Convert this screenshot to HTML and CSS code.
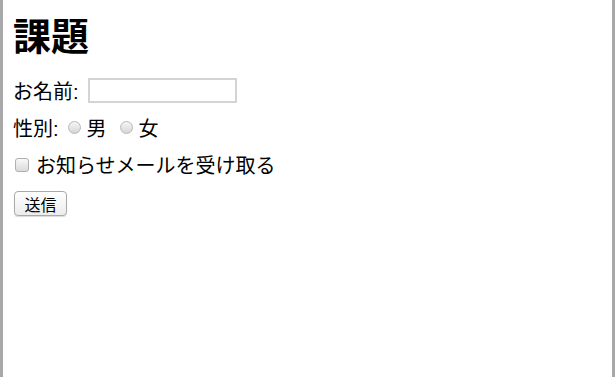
FILE: index.html
```html
<!DOCTYPE html>
<html lang="ja">
<head>
    <meta charset="UTF-8">
    <title>課題</title>
    <link rel="stylesheet" href="styles.css">
</head>
<body>
    <div class="page">
        <h1>課題</h1>

        <form class="form">
            <div class="row">
                <label for="name">お名前:</label>
                <input type="text" id="name" class="text-input">
            </div>

            <div class="row">
                <span>性別:</span>
                <label class="choice"><input type="radio" name="gender" class="radio">男</label>
                <label class="choice"><input type="radio" name="gender" class="radio">女</label>
            </div>

            <div class="row">
                <label class="choice first"><input type="checkbox" class="check">お知らせメールを受け取る</label>
            </div>

            <div class="row row-button">
                <button type="button" class="submit">送信</button>
            </div>
        </form>
    </div>
</body>
</html>
```

FILE: styles.css
```css
html, body {
    margin: 0;
    height: 100%;
    background: #fff;
}

body {
    font-family: "Liberation Sans", "Noto Sans CJK JP", sans-serif;
    font-size: 20px;
    color: #000;
}

.page {
    box-sizing: border-box;
    min-height: 100vh;
    border-left: 3px solid #a8a8a8;
    border-right: 3px solid #a8a8a8;
    padding: 0 10px;
}

h1 {
    font-size: 38px;
    line-height: 48px;
    margin: 0 0 11px;
    padding-top: 13px;
    font-weight: bold;
}

.form {
    display: flex;
    flex-direction: column;
}

.row {
    display: flex;
    align-items: center;
    height: 37px;
}

.row label,
.row span {
    display: inline-flex;
    align-items: center;
}

.text-input {
    width: 149px;
    height: 25px;
    box-sizing: border-box;
    border: 2px solid #d4d4d4;
    border-radius: 0;
    margin: 0 0 0 9px;
    padding: 0;
    outline: none;
}

.choice {
    margin-left: 9px;
}

.choice + .choice {
    margin-left: 13px;
}

.choice.first {
    margin-left: 2px;
}

.radio {
    appearance: none;
    width: 13px;
    height: 13px;
    margin: 0 6px 0 0;
    border: 1px solid #b8b8b8;
    border-radius: 50%;
    background: linear-gradient(#f6f6f6, #d6d6d6);
    box-sizing: border-box;
}

.check {
    appearance: none;
    width: 14px;
    height: 14px;
    margin: 0 7px 0 0;
    border: 1px solid #b0b0b0;
    border-radius: 3px;
    background: linear-gradient(#f8f8f8, #dadada);
    box-sizing: border-box;
}

.row-button {
    height: auto;
    margin-top: 8px;
}

.submit {
    font-family: "Liberation Sans", "Noto Sans CJK JP", sans-serif;
    font-size: 16px;
    height: 25px;
    width: 53px;
    padding: 0;
    margin-left: 1px;
    border: 1px solid #a9a9a9;
    border-radius: 4px;
    background: linear-gradient(#ffffff, #ececec);
    color: #000;
    box-shadow: 0 1px 1px rgba(0, 0, 0, 0.15);
}
```
